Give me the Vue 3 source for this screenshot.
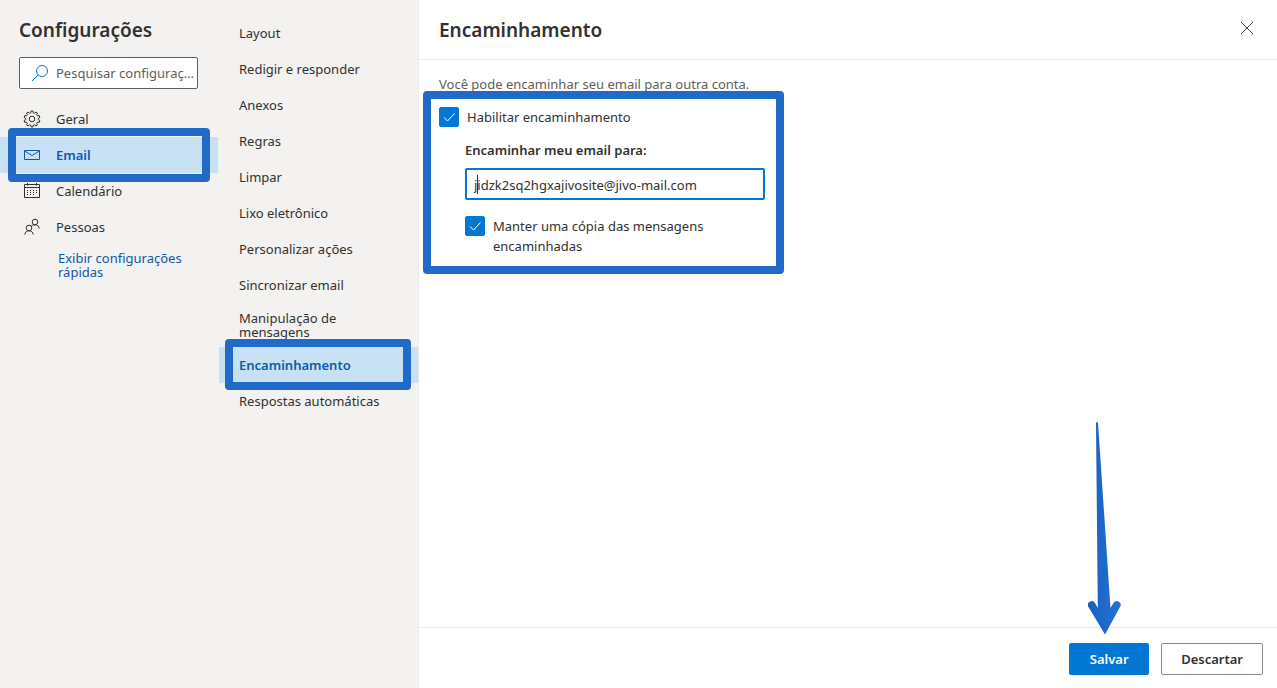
<template>
  <div class="settings">
    <aside class="sidebar">
      <h1 class="title">Configurações</h1>
      <label class="search">
        <svg class="search-icon" width="18" height="18" viewBox="0 0 18 18">
          <circle cx="11" cy="7" r="5.5" />
          <path d="M7 11L1 17" />
        </svg>
        <input type="text" aria-label="Pesquisar configurações" placeholder="Pesquisar configurações" />
      </label>
      <nav class="categories">
        <button
          v-for="item in categories"
          :key="item.id"
          class="category"
          :class="{ active: item.id === category }"
          @click="category = item.id"
        >
          <svg class="icon" width="18" height="18" viewBox="0 0 18 18">
            <path v-for="(d, i) in item.icon" :key="i" :d="d" />
          </svg>
          <span>{{ item.label }}</span>
        </button>
      </nav>
      <a href="#" class="quick">Exibir configurações rápidas</a>
    </aside>

    <nav class="sections">
      <button
        v-for="item in sections"
        :key="item"
        class="section"
        :class="{ active: item === section }"
        @click="section = item"
      >
        {{ item }}
      </button>
    </nav>

    <main class="panel">
      <header class="header">
        <h2 class="title">Encaminhamento</h2>
        <button class="close" aria-label="Fechar">
          <svg width="14" height="14" viewBox="0 0 14 14">
            <path d="M1 1L13 13M13 1L1 13" />
          </svg>
        </button>
      </header>
      <div class="content">
        <p class="hint">Você pode encaminhar seu email para outra conta.</p>
        <div class="form">
          <label class="check">
            <input v-model="enabled" type="checkbox" />
            <svg class="tick" width="20" height="20" viewBox="0 0 20 20">
              <path d="M5 10.5L8.5 14L15.5 6.5" />
            </svg>
            <span>Habilitar encaminhamento</span>
          </label>
          <div class="nested">
            <label class="field-label" for="address">Encaminhar meu email para:</label>
            <div class="field">
              <input id="address" v-model="address" type="text" />
              <span class="caret"></span>
            </div>
            <label class="check">
              <input v-model="keepCopy" type="checkbox" />
              <svg class="tick" width="20" height="20" viewBox="0 0 20 20">
                <path d="M5 10.5L8.5 14L15.5 6.5" />
              </svg>
              <span>Manter uma cópia das mensagens encaminhadas</span>
            </label>
          </div>
        </div>
      </div>
      <footer class="footer">
        <button class="btn primary">
          Salvar
          <svg class="arrow" width="34" height="214" viewBox="0 0 34 214">
            <defs>
              <linearGradient id="arrow-fill" x1="0" y1="0" x2="1" y2="0">
                <stop offset="0" stop-color="#1a5fc0" />
                <stop offset="1" stop-color="#2472d2" />
              </linearGradient>
            </defs>
            <path
              fill="url(#arrow-fill)"
              d="M8 2Q9 0 10 2L22.500 187L25.500 182A3.800 3.800 0 0 1 32 186L17 213.500L.5 186A3.800 3.800 0 0 1 7 182L9.800 187Z"
            />
          </svg>
        </button>
        <button class="btn">Descartar</button>
      </footer>
    </main>
  </div>
</template>

<script setup>
import { ref } from 'vue'

// gear outline with ten teeth
const gear = () => {
  const points = []
  for (let i = 0; i < 10; i++) {
    const a = (i * Math.PI) / 5
    for (const [offset, r] of [[-0.2, 6.3], [-0.13, 8], [0.13, 8], [0.2, 6.3]]) {
      points.push(`${(9 + r * Math.sin(a + offset)).toFixed(2)} ${(9 - r * Math.cos(a + offset)).toFixed(2)}`)
    }
  }
  return `M${points.join('L')}Z`
}

const categories = [
  {
    id: 'general',
    label: 'Geral',
    icon: [gear(), 'M6.200 9a2.800 2.800 0 1 0 5.600 0a2.800 2.800 0 1 0 -5.600 0']
  },
  {
    id: 'email',
    label: 'Email',
    icon: ['M1.500 4.500H16.500V13.500H1.500Z', 'M1.500 5L9 9.500L16.500 5']
  },
  {
    id: 'calendar',
    label: 'Calendário',
    icon: [
      'M1.500 2.500H16.500V15.500H1.500Z',
      'M1.500 5.500H16.500M4.500 1V3.500M13.500 1V3.500',
      'M4 8.500H5M7 8.500H8M10 8.500H11M13 8.500H14M4 10.500H5M7 10.500H8M10 10.500H11M13 10.500H14M4 12.500H5M7 12.500H8M10 12.500H11'
    ]
  },
  {
    id: 'people',
    label: 'Pessoas',
    icon: [
      'M9.200 4a2.800 2.800 0 1 0 5.600 0a2.800 2.800 0 1 0 -5.600 0',
      'M3.200 10a2.800 2.800 0 1 0 5.600 0a2.800 2.800 0 1 0 -5.600 0',
      'M1.800 16.500C2 14.200 3.600 12.800 6 12.800S10 14.200 10.200 16.500',
      'M8.200 8.200C9 7.200 10.300 6.800 12 6.800C14.400 6.800 16 8.200 16.200 10.500'
    ]
  }
]

const sections = [
  'Layout',
  'Redigir e responder',
  'Anexos',
  'Regras',
  'Limpar',
  'Lixo eletrônico',
  'Personalizar ações',
  'Sincronizar email',
  'Manipulação de mensagens',
  'Encaminhamento',
  'Respostas automáticas'
]

const category = ref('email')
const section = ref('Encaminhamento')
const enabled = ref(true)
const keepCopy = ref(true)
const address = ref('jidzk2sq2hgxajivosite@jivo-mail.com')
</script>

<style>
body {
  margin: 0;
}
</style>

<style scoped>
.settings {
  display: grid;
  grid-template-columns: 218px 201px 1fr;
  min-height: 100vh;
  background-color: #f3f2f1;
  color: #323130;
  font-family: 'Noto Sans', sans-serif;
  font-size: 13px;
  line-height: 20px;
}
button,
input {
  font: inherit;
  color: inherit;
}
button {
  cursor: pointer;
}
.title {
  margin: 0;
  font-size: 19px;
  font-weight: 600;
  line-height: 28px;
}
.sidebar .title {
  padding: 16px 19px 13px;
}
.search {
  display: flex;
  align-items: center;
  gap: 7px;
  height: 30px;
  margin: 0 20px 12px 19px;
  padding: 0 1px 0 11px;
  border: 1px solid #605e5c;
  border-radius: 2px;
  background-color: #fff;
}
.search-icon {
  flex: none;
  fill: none;
  stroke: #0078d4;
}
.search input {
  flex: 1;
  min-width: 0;
  padding: 0;
  border: none;
  outline: none;
  background: none;
  text-overflow: ellipsis;
}
.search input::placeholder {
  color: #605e5c;
}
.categories,
.sections {
  display: flex;
  flex-direction: column;
}
.category,
.section {
  position: relative;
  display: flex;
  align-items: center;
  min-height: 36px;
  border: none;
  background: none;
  text-align: left;
}
.category {
  gap: 15px;
  padding: 0 23px;
}
.icon {
  fill: none;
  stroke: currentColor;
}
.quick {
  display: block;
  margin: 6px 20px 0 58px;
  color: #0f5aa8;
  line-height: 14px;
  text-decoration: none;
}
.sections {
  padding: 15px 0 0 1px;
  border-right: 1px solid #edebe9;
}
.section {
  padding: 4px 32px 4px 20px;
  line-height: 14px;
}
.section:nth-child(9) {
  min-height: 44px;
}
.category.active,
.section.active {
  background-color: #c7e0f4;
  color: #0f5aa8;
  font-weight: 600;
}
.category.active::after,
.section.active::after,
.form::after {
  content: '';
  position: absolute;
  border: 8px solid #226ac8;
  border-radius: 4px;
  pointer-events: none;
}
.category.active::after {
  z-index: 1;
  inset: -9px 8px;
}
.section.active::after {
  z-index: 1;
  inset: -8px 7px -7px 6px;
}
.panel {
  display: flex;
  flex-direction: column;
  background-color: #fff;
}
.header {
  display: flex;
  align-items: center;
  justify-content: space-between;
  height: 59px;
  padding: 0 23px 0 20px;
  border-bottom: 1px solid #edebe9;
}
.close {
  display: flex;
  padding: 0 0 4px;
  border: none;
  background: none;
}
.close svg {
  fill: none;
  stroke: #484644;
}
.content {
  flex: 1;
  padding: 14px 20px;
}
.hint {
  margin: 0 0 13px;
  color: #605e5c;
}
.form {
  position: relative;
  max-width: 326px;
}
.form::after {
  inset: -16px -19px -18px -16px;
}
.check {
  position: relative;
  display: flex;
  gap: 8px;
}
.check input {
  appearance: none;
  flex: none;
  width: 20px;
  height: 20px;
  margin: 0;
  border: 1px solid #323130;
  border-radius: 2px;
}
.check input:checked {
  border-color: #0078d4;
  background-color: #0078d4;
}
.tick {
  position: absolute;
  top: 0;
  left: 0;
  fill: none;
  stroke: #fff;
}
.nested {
  padding: 13px 0 0 26px;
}
.field-label {
  display: block;
  margin-bottom: 8px;
  font-weight: 600;
}
.field {
  position: relative;
  margin-bottom: 16px;
}
.field input {
  box-sizing: border-box;
  width: 100%;
  height: 32px;
  padding: 2px 7px 0;
  border: 2px solid #0078d4;
  border-radius: 2px;
  outline: none;
}
.caret {
  position: absolute;
  top: 7px;
  left: 12px;
  width: 1px;
  height: 19px;
  background-color: #323130;
}
.footer {
  display: flex;
  align-items: center;
  justify-content: flex-end;
  gap: 12px;
  height: 58px;
  padding: 2px 14px 0;
  border-top: 1px solid #edebe9;
}
.btn {
  position: relative;
  min-width: 80px;
  height: 32px;
  padding: 0 19px;
  border: 1px solid #8a8886;
  border-radius: 2px;
  background-color: #fff;
  font-weight: 600;
}
.primary {
  border-color: #0078d4;
  background-color: #0078d4;
  color: #fff;
}
.arrow {
  position: absolute;
  right: 26px;
  bottom: 39px;
  pointer-events: none;
}
</style>
